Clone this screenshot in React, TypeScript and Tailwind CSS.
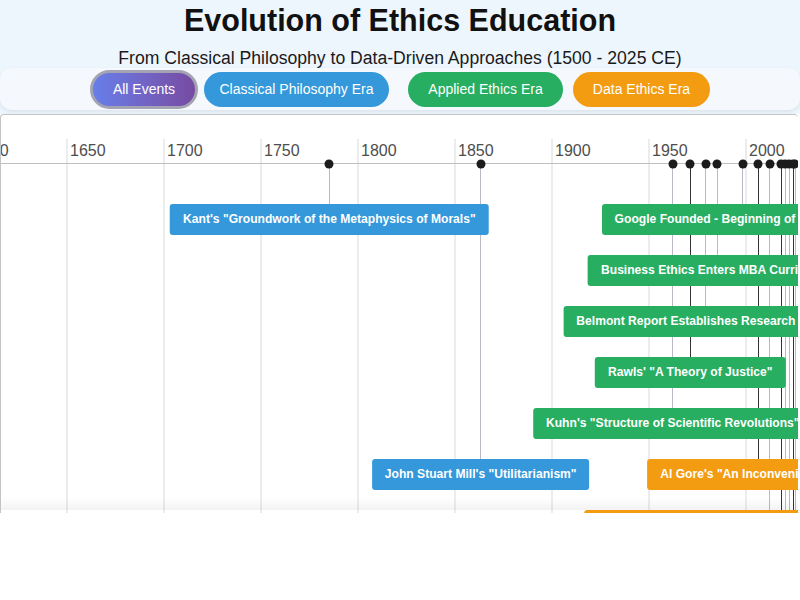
import React from 'react';

type Era = 'classical' | 'applied' | 'data';

interface TimelineEvent {
  year: number;
  label: string;
  row: number;
  era: Era;
  darkLine?: boolean;
}

const eraColor: Record<Era, string> = {
  classical: 'bg-[#3498db]',
  applied: 'bg-[#27ae60]',
  data: 'bg-[#f39c12]',
};

// 50 years = 97px, 1650 sits at x=66
const yearToX = (year: number) => 66 + (year - 1650) * 1.94;

const AXIS_Y = 48;
const ROW_TOP = 89;
const ROW_GAP = 51;

const events: TimelineEvent[] = [
  { year: 1785, label: `Kant's "Groundwork of the Metaphysics of Morals"`, row: 0, era: 'classical' },
  { year: 1863, label: `John Stuart Mill's "Utilitarianism"`, row: 5, era: 'classical' },
  { year: 1962, label: `Kuhn's "Structure of Scientific Revolutions"`, row: 4, era: 'applied' },
  { year: 1971, label: `Rawls' "A Theory of Justice"`, row: 3, era: 'applied', darkLine: true },
  { year: 1979, label: 'Belmont Report Establishes Research Ethics', row: 2, era: 'applied' },
  { year: 1985, label: 'Business Ethics Enters MBA Curriculum', row: 1, era: 'applied' },
  { year: 1998, label: 'Google Founded - Beginning of Big Data Era', row: 0, era: 'applied' },
  { year: 2006, label: `Al Gore's "An Inconvenient Truth"`, row: 5, era: 'data', darkLine: true },
  { year: 2012, label: `Harvard Business Review Calls Data Scientist "Sexiest Job"`, row: 6, era: 'data' },
  { year: 2018, label: 'GDPR Takes Effect', row: 8, era: 'data', darkLine: true },
  { year: 2020, label: 'Data Ethics Courses Go Mainstream', row: 9, era: 'data' },
  { year: 2022, label: 'Generative AI Ethics Debates', row: 10, era: 'data' },
  { year: 2024, label: 'EU AI Act Adopted', row: 11, era: 'data', darkLine: true },
  { year: 2025, label: 'Responsible AI Curricula', row: 12, era: 'data' },
];

const majorYears = [1600, 1650, 1700, 1750, 1800, 1850, 1900, 1950, 2000];

const filters = [
  { label: 'All Events', cls: 'w-[108px] h-[39px] border-[3px] border-[#a3a3b3] bg-gradient-to-r from-[#667eea] to-[#764ba2]' },
  { label: 'Classical Philosophy Era', cls: 'ml-[6px] w-[185px] h-[35px] bg-[#3498db]' },
  { label: 'Applied Ethics Era', cls: 'ml-[19px] w-[155px] h-[35px] bg-[#27ae60]' },
  { label: 'Data Ethics Era', cls: 'ml-[10px] w-[137px] h-[35px] bg-[#f39c12]' },
];

export default function App() {
  return (
    <div className="w-[800px] h-[600px] bg-white overflow-hidden font-['Liberation_Sans',Arial,sans-serif]">
      {/* Header */}
      <header className="bg-[#eef6fd] pt-[2px] pb-[4px]">
        <h1 className="text-center text-[30.5px] leading-[36px] font-bold text-[#111]">
          Evolution of Ethics Education
        </h1>
        <p className="mt-[10px] text-center text-[17.6px] leading-[20px] text-[#1a1a1a]">
          From Classical Philosophy to Data-Driven Approaches (1500 - 2025 CE)
        </p>
        <div className="h-[42px] flex items-center justify-center bg-[#f5f9fe] rounded-[12px] shadow-[0_2px_4px_rgba(0,0,0,0.08)]">
          {filters.map((f) => (
            <button
              key={f.label}
              className={`${f.cls} rounded-full flex items-center justify-center text-white text-[14px] shrink-0`}
            >
              {f.label}
            </button>
          ))}
        </div>
      </header>

      {/* Timeline canvas */}
      <div className="relative h-[399px] w-[798px] bg-white border-t border-l border-[#c4c4c4] rounded-tl-[4px] rounded-tr-[4px] overflow-hidden">
        {/* grid lines + axis labels */}
        {majorYears.map((y) => (
          <React.Fragment key={y}>
            <div
              className="absolute top-[24px] bottom-0 w-[2px] bg-[#ececec]"
              style={{ left: yearToX(y) - 1 }}
            />
            <div
              className="absolute top-[26px] text-[16px] leading-[20px] text-[#4d4d4d]"
              style={{ left: yearToX(y) + 3 }}
            >
              {y}
            </div>
          </React.Fragment>
        ))}

        {/* axis line */}
        <div className="absolute left-0 right-0 top-[48px] h-px bg-[#bfbfbf]" />

        {/* connector lines */}
        {events.map((e) => (
          <div
            key={`line-${e.year}`}
            className={`absolute w-px ${e.darkLine ? 'bg-[#333]' : 'bg-[#b9b9c9]'}`}
            style={{
              left: Math.round(yearToX(e.year)),
              top: AXIS_Y,
              height: ROW_TOP + e.row * ROW_GAP - AXIS_Y,
            }}
          />
        ))}

        {/* item boxes */}
        {events.map((e) => (
          <div
            key={`box-${e.year}`}
            className={`absolute -translate-x-1/2 whitespace-nowrap rounded-[3px] px-[13px] h-[31px] flex items-center text-white text-[12.1px] font-bold ${eraColor[e.era]}`}
            style={{ left: yearToX(e.year) + 0.5, top: ROW_TOP + e.row * ROW_GAP }}
          >
            {e.label}
          </div>
        ))}

        {/* dots */}
        {events.map((e) => (
          <div
            key={`dot-${e.year}`}
            className="absolute w-[9px] h-[9px] rounded-full bg-[#1c1c1c] -translate-x-1/2 -translate-y-1/2"
            style={{ left: yearToX(e.year) + 0.5, top: AXIS_Y + 0.5 }}
          />
        ))}

        {/* bottom shadow */}
        <div className="absolute left-0 right-0 bottom-[3px] h-[12px] bg-gradient-to-b from-transparent to-black/[0.05] pointer-events-none" />
      </div>
    </div>
  );
}
